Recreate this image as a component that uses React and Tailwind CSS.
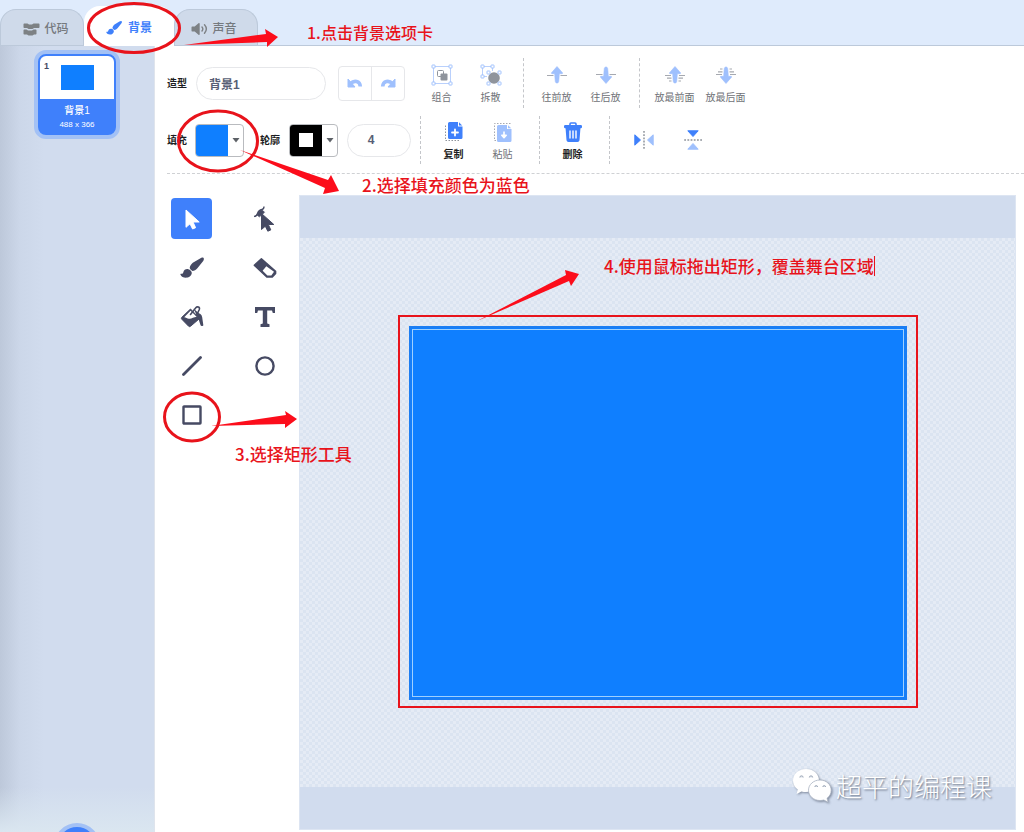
import { useState } from "react";

const dark = "#464a63";

function CursorIcon() {
  return (
    <svg viewBox="0 0 24 24" className="size-6" fill="currentColor" stroke="currentColor" strokeLinejoin="round">
      <path d="M6 3v17.300l4-3.500 2.600 5.200 3-1.300-2.600-5.700h6.200z" />
    </svg>
  );
}

function ReshapeIcon() {
  return (
    <svg viewBox="0 0 26 28" className="h-7 w-[26px]" fill={dark} stroke={dark} strokeLinejoin="round">
      <path d="M2 11.500c2.500-.2 3-1 3.500-3 .8-2.500 2.200-3.500 4.500-4 1.500-.3 2-1.200 2-3" fill="none" strokeWidth="1.300" />
      <path d="M5.500 10.500c.2-3 2-5 5-5.200l2 2-5 4.500z" strokeWidth=".8" />
      <path d="M9.500 8.500v16l3.800-3.300 2.500 5 3-1.300-2.500-5.400h5.500z" />
    </svg>
  );
}

function BrushIcon({ className = "size-6" }) {
  return (
    <svg viewBox="0 0 24 24" className={className} fill="currentColor">
      <path d="M23.400 1.800c.8.700.5 2-.2 3.200l-5.600 7c-1.500 1.900-3.500 2.900-5.200 2.900-1.200-.6-2.300-1.700-2.700-2.900.2-1.900 1.300-3.700 3.100-5.200l7.300-4.400c1.200-.9 2.500-1.300 3.300-.6z" />
      <path d="M8.300 13.200c2 .5 3.400 2 3.500 3.900-.3 3-3 4.700-5.900 4.700-2.500 0-4.600-1.100-5.500-3.300-.2-.6.200-1 .8-.8 1.400.3 1.900-.4 2.200-1.700.5-2 2.500-3.300 4.900-2.800z" />
    </svg>
  );
}

function EraserIcon() {
  return (
    <svg viewBox="0 0 24 24" className="size-6" stroke={dark} strokeWidth="1.500" strokeLinejoin="round">
      <path d="M8.400 2.800L1.300 9.300 13.800 21h5.500l3.300-3.600v-2z" fill={dark} />
      <path d="M13.300 10.300l7.700 5.500-2.700 3.700h-3.900l-4.800-4.700z" fill="white" stroke="none" />
    </svg>
  );
}

function FillIcon() {
  return (
    <svg viewBox="0 0 24 24" className="size-6" fill={dark}>
      <path d="M10.500 4L1.800 12.300c-.6.600-.6 1.200 0 1.900l6.800 7c.6.600 1.300.6 2 0l9-7.700z" stroke={dark} strokeLinejoin="round" />
      <path d="M4.200 12.200l6.300-6.400 6.200 6c-3 .4-5.200 2.200-7.700 1.900-2-.2-3-1.500-4.800-1.500z" fill="white" />
      <path d="M10.500 9.500l5.300-6.800c1.500-1.800 4.400-.5 3.500 1.800l-2.800 6" fill="none" stroke={dark} strokeWidth="1.600" strokeLinecap="round" />
      <path d="M13.500 3.500l5 4.500c3 .8 3.800 3.200 4 6.500l.8 5.500c.2 1.200-2.300 1.500-2.800 0L18.500 14z" />
    </svg>
  );
}

function TextIcon() {
  return (
    <svg viewBox="0 0 20 20" className="size-5" fill={dark}>
      <path d="M0 0h20v6h-2.200l-.8-2.600h-4.800v13.200l2.300.6V20h-9v-2.800l2.300-.6V3.400H3L2.200 6H0z" />
    </svg>
  );
}

function LineIcon() {
  return (
    <svg viewBox="0 0 20 20" className="size-5" stroke={dark} strokeWidth="2.800" strokeLinecap="round">
      <path d="M1.500 18.500l17-17" />
    </svg>
  );
}

function OvalIcon() {
  return (
    <svg viewBox="0 0 20 20" className="size-5" stroke={dark} strokeWidth="2.400" fill="none">
      <circle cx="10" cy="10" r="8.600" />
    </svg>
  );
}

function RectIcon() {
  return (
    <svg viewBox="0 0 20 20" className="size-5" stroke={dark} strokeWidth="2.400" fill="none">
      <rect x="1.500" y="1.500" width="17" height="17" rx=".5" />
    </svg>
  );
}

function Handles({ points }) {
  return points.map(([x, y]) => (
    <rect key={`${x}-${y}`} x={x - 1.5} y={y - 1.5} width="3" height="3" rx=".5" fill="white" stroke="#9fc0fd" />
  ));
}

function GroupIcon() {
  return (
    <svg viewBox="0 0 22 22" className="size-[22px]">
      <rect x="2.500" y="2.500" width="17" height="17" fill="none" stroke="#b9d0fc" />
      <rect x="6.500" y="6.500" width="6" height="6" rx="1" fill="white" stroke="#8f949c" />
      <rect x="9.500" y="9.500" width="7" height="7" rx="1" fill="#8f949c" />
      <Handles points={[[2.5, 2.5], [19.5, 2.5], [2.5, 19.5], [19.5, 19.5]]} />
    </svg>
  );
}

function UngroupIcon() {
  return (
    <svg viewBox="0 0 22 22" className="size-[22px]">
      <path d="M12.500 7V2.500h-10v10H7" fill="none" stroke="#b9d0fc" />
      <circle cx="14" cy="14" r="5.800" fill="#8f949c" />
      <Handles points={[[2.5, 2.5], [12.5, 2.5], [2.5, 12.5], [8.5, 8.5], [19.5, 8.5], [8.5, 19.5], [19.5, 19.5]]} />
    </svg>
  );
}

function ArrangeIcon({ down, far }) {
  return (
    <svg viewBox="0 0 22 22" className="size-[22px]">
      <g transform={down ? "rotate(180 11 11)" : undefined}>
        <path
          d={far ? "M1 11.500h6M15 11.500h6M3 14.200h4.500M14.500 14.200H19M5 17h2.500M14.500 17H17" : "M1 11.500h6.500M14.500 11.500H21"}
          stroke="#a6a9b0"
          strokeWidth="1.200"
        />
        <path
          d="M11 2.500L5.500 8.800c-.3.500 0 .9.500.9h2.700c.2 3 .3 5.500.6 7.800.3 2 3.100 2 3.400 0 .3-2.300.4-4.800.6-7.800H16c.5 0 .8-.4.500-.9z"
          fill="#9fc0fd"
          stroke="#9fc0fd"
          strokeWidth=".6"
          strokeLinejoin="round"
        />
      </g>
    </svg>
  );
}

function UndoIcon({ flip }) {
  return (
    <svg viewBox="0 0 20 20" className="size-5" fill="#9fc0fd" stroke="#9fc0fd" strokeLinejoin="round">
      <g transform={flip ? "matrix(-1 0 0 1 20 0)" : undefined}>
        <path d="M3 6v8h7z" />
        <path d="M5.500 10.500c3.500-3.500 9.500-2.800 9.800 3" fill="none" strokeWidth="3.600" />
      </g>
    </svg>
  );
}

function CopyIcon() {
  return (
    <svg viewBox="0 0 20 20" className="size-5">
      <path d="M1.500 3.500v15h14" fill="none" stroke="#8f949c" strokeDasharray="1.500 1.500" />
      <path d="M5.500 0H14v4.500h4.500v11a1.500 1.500 0 0 1-1.500 1.500H5.500A1.500 1.500 0 0 1 4 15.500v-14A1.500 1.500 0 0 1 5.500 0z" fill="#3f80fb" />
      <path d="M15 .3l3.200 3.200H15z" fill="#3f80fb" />
      <path d="M11 7.500v6M8 10.500h6" stroke="white" strokeWidth="1.800" strokeLinecap="round" />
    </svg>
  );
}

function PasteIcon() {
  return (
    <svg viewBox="0 0 20 20" className="size-5">
      <path d="M17.500 1.500h-16v17H4" fill="none" stroke="#a6a9b0" strokeDasharray="1.500 1.500" />
      <path d="M5.500 3H14v4h4.500v11.500A1.500 1.500 0 0 1 17 20H5.500A1.500 1.500 0 0 1 4 18.500v-14A1.500 1.500 0 0 1 5.500 3z" fill="#9fc0fd" />
      <path d="M15 3.200l3.200 3H15z" fill="#9fc0fd" />
      <path d="M11 9.500v6M8.800 13.300l2.200 2.400 2.200-2.400z" fill="white" stroke="white" strokeWidth="1.600" strokeLinejoin="round" />
    </svg>
  );
}

function DeleteIcon() {
  return (
    <svg viewBox="0 0 20 20" className="size-5">
      <path d="M7 3.500V2a1 1 0 0 1 1-1h4a1 1 0 0 1 1 1v1.500" fill="none" stroke="#3f80fb" strokeWidth="1.600" />
      <rect x="1" y="3" width="18" height="3.200" rx="1.200" fill="#3f80fb" />
      <path d="M2.500 5.500h15l-1 12.700a2 2 0 0 1-2 1.800h-9a2 2 0 0 1-2-1.800z" fill="#3f80fb" />
      <path d="M7 9v7M10 9v7M13 9v7" stroke="white" strokeWidth="1.400" strokeLinecap="round" />
    </svg>
  );
}

function FlipIcon({ vertical }) {
  return (
    <svg viewBox="0 0 20 20" className="size-5" strokeLinejoin="round">
      <g transform={vertical ? "rotate(90 10 10)" : undefined}>
        <path d="M.8 4.800v10.400L6.500 10z" fill="#3f80fb" stroke="#3f80fb" />
        <path d="M19.200 4.800v10.400L13.500 10z" fill="#9fc0fd" stroke="#9fc0fd" />
        <path d="M10 1v18" stroke="#8f949c" strokeWidth="1.500" strokeDasharray="1.800 1.400" />
      </g>
    </svg>
  );
}

function CodeIcon() {
  return (
    <svg viewBox="0 0 17 14" className="h-3.5 w-[17px]" fill="#7d8184">
      <path d="M1.500 1.500h3l1.500 1h3l1.500-1h5c.6 0 1 .4 1 1v2.500c0 .6-.4 1-1 1H11l-1.500 1h-4L4 6H1.500c-.6 0-1-.4-1-1V2.500c0-.6.400-1 1-1z" />
      <path d="M1.500 7.500h2l1.500 1h4l1.500-1h2c.6 0 1 .4 1 1v3c0 .6-.4 1-1 1H11l-1.500 1H5.500L4 12.500H1.500c-.6 0-1-.4-1-1v-3c0-.6.400-1 1-1z" />
    </svg>
  );
}

function SoundIcon() {
  return (
    <svg viewBox="0 0 17 14" className="h-3.5 w-[17px]" fill="#7d8184">
      <path d="M1.500 4.500h2.200L7.500 1.200c.6-.5 1.200-.2 1.200.6v10.400c0 .8-.6 1.100-1.200.6L3.700 9.500H1.500c-.8 0-1-.5-1-1v-3c0-.5.200-1 1-1z" />
      <path d="M11 5c1 1.200 1 2.800 0 4M13.500 2.800c2.200 2.500 2.200 5.900 0 8.400" fill="none" stroke="#7d8184" strokeWidth="1.400" strokeLinecap="round" />
    </svg>
  );
}

function WeChatIcon() {
  return (
    <svg viewBox="0 0 40 36" className="h-9 w-10 drop-shadow-[1px_1px_1px_rgba(90,100,120,0.7)]">
      <path d="M14 1C6.500 1 1 6 1 12.500c0 3.600 1.800 6.800 4.800 9L4.500 26l5-2.500c1.500.4 3 .6 4.500.6 7.500 0 13-5 13-11.600S21.500 1 14 1z" fill="white" />
      <path d="M28 12c-6.500 0-11.500 4.600-11.500 10.200S21.500 32.500 28 32.500c1.300 0 2.600-.2 3.800-.5l4.400 2.300-1.200-4c2.600-1.900 4.200-4.800 4.200-8.100C39.200 16.600 34.300 12 28 12z" fill="white" stroke="#a9b3c2" strokeWidth=".8" />
      <g fill="#dde3ec" stroke="#8f9aab" strokeWidth=".8">
        <path d="M7.800 9.500a1.700 1.700 0 1 1 3.400 0M17.300 9.500a1.700 1.700 0 1 1 3.400 0" />
        <path d="M22.800 19a1.400 1.400 0 1 1 2.800 0M30.800 19a1.400 1.400 0 1 1 2.800 0" />
      </g>
    </svg>
  );
}

function ActionButton({ icon, label, enabled, wide }) {
  return (
    <button
      type="button"
      className={`flex flex-col items-center gap-1 whitespace-nowrap pt-1 text-[10px] leading-4 ${wide ? "w-[51px]" : "w-[49px]"} ${
        enabled ? "font-bold text-[#1c1d22]" : "text-[#6f7277]"
      }`}
    >
      <span className="flex h-[22px] items-center">{icon}</span>
      {label}
    </button>
  );
}

function Divider({ className }) {
  return <div className={`self-stretch border-l border-dashed border-[#c4c6ca] ${className}`} />;
}

function ColorPicker({ label, children, swatch }) {
  return (
    <button
      type="button"
      aria-label={label}
      className="flex h-[33px] w-[49px] shrink-0 overflow-hidden rounded-[4px] border border-[#b9bbbf] bg-white"
    >
      <span className={`flex h-full w-8 items-center justify-center ${swatch}`}>{children}</span>
      <span className="flex h-full flex-1 items-center justify-center">
        <svg viewBox="0 0 8 5" className="h-[5px] w-2" fill="#5c6066">
          <path d="M.5 0h7L4 4.500z" />
        </svg>
      </span>
    </button>
  );
}

const tools = [
  { name: "选择", icon: <CursorIcon /> },
  { name: "变形", icon: <ReshapeIcon /> },
  { name: "画笔", icon: <BrushIcon /> },
  { name: "橡皮擦", icon: <EraserIcon /> },
  { name: "填充", icon: <FillIcon /> },
  { name: "文本", icon: <TextIcon /> },
  { name: "线段", icon: <LineIcon /> },
  { name: "圆", icon: <OvalIcon /> },
  { name: "矩形", icon: <RectIcon /> },
];

function Tabs() {
  return (
    <div className="flex h-[46px] items-end border-b border-[#bcc9da] text-xs font-medium text-[#75797e]">
      <button type="button" className="flex h-9 w-[84px] items-center justify-center gap-1 rounded-t-2xl border border-b-0 border-[#bcc9da] bg-[#cfdaea] pl-2 pt-0.5">
        <CodeIcon />
        代码
      </button>
      <button type="button" className="-mb-px flex h-10 w-[90px] items-center justify-center gap-1.5 rounded-t-2xl bg-white pt-1 font-bold text-[#3f80fb]">
        <BrushIcon className="size-4" />
        背景
      </button>
      <button type="button" className="flex h-9 w-[84px] items-center justify-center gap-1 rounded-t-2xl border border-b-0 border-[#bcc9da] bg-[#cfdaea] pr-1 pt-0.5">
        <SoundIcon />
        声音
      </button>
    </div>
  );
}

function Sidebar() {
  return (
    <aside className="flex w-[154px] shrink-0 flex-col items-center justify-between bg-[linear-gradient(90deg,#bdc8da_0,#ccd7e9_20px,#d1dcee_44px)] pt-1">
      <button type="button" className="w-[86px] overflow-hidden rounded-xl border-4 border-[#a3c1f5] bg-[#3f80fb] text-white">
        <span className="relative mx-0.5 mt-0.5 flex h-[43px] items-center justify-center rounded-t-md bg-white">
          <span className="absolute left-1 top-1 text-[9px] font-bold leading-3 text-[#464a63]">1</span>
          <span className="h-[25px] w-[33px] bg-[#0f7fff]" />
        </span>
        <span className="mt-1 block text-[10px] font-medium leading-4">背景1</span>
        <span className="mb-1 block text-[8px] leading-3">488 x 366</span>
      </button>
      <div className="flex h-[45px] w-full justify-center overflow-hidden bg-linear-to-b from-transparent to-[#dae6f0] pt-9">
        <button type="button" aria-label="选择一个背景" className="size-[46px] shrink-0 rounded-full border-4 border-[#a3c1f5] bg-[#3f80fb]" />
      </div>
    </aside>
  );
}

function Toolbar() {
  const [name, setName] = useState("背景1");
  const [width, setWidth] = useState("4");

  return (
    <div className="ml-3 border-b border-dashed border-[#cfd1d4] pb-[9px] pt-3">
      <div className="flex h-[50px] items-center">
        <label htmlFor="costume" className="w-[29px] shrink-0 text-[10px] font-bold text-[#1c1d22]">造型</label>
        <input
          id="costume"
          value={name}
          onChange={(e) => setName(e.target.value)}
          className="h-[33px] w-[130px] rounded-full border border-[#e6e7ea] px-3 text-xs font-bold text-[#575e75]"
        />
        <div className="ml-3 flex h-[35px] w-[67px] divide-x divide-[#e6e7ea] rounded-[4px] border border-[#e6e7ea]">
          <button type="button" aria-label="撤销" className="flex flex-1 items-center justify-center">
            <UndoIcon />
          </button>
          <button type="button" aria-label="重做" className="flex flex-1 items-center justify-center">
            <UndoIcon flip />
          </button>
        </div>
        <div className="ml-3 flex">
          <ActionButton icon={<GroupIcon />} label="组合" />
          <ActionButton icon={<UngroupIcon />} label="拆散" />
        </div>
        <Divider className="mx-2" />
        <ActionButton icon={<ArrangeIcon />} label="往前放" />
        <ActionButton icon={<ArrangeIcon down />} label="往后放" />
        <Divider className="mx-[9px]" />
        <ActionButton icon={<ArrangeIcon far />} label="放最前面" wide />
        <ActionButton icon={<ArrangeIcon far down />} label="放最后面" wide />
      </div>
      <div className="mt-2 flex h-12 items-center">
        <span className="w-7 shrink-0 text-[10px] font-bold text-[#1c1d22]">填充</span>
        <ColorPicker label="填充" swatch="bg-[#0f7fff]" />
        <span className="ml-4 w-[29px] shrink-0 text-[10px] font-bold text-[#1c1d22]">轮廓</span>
        <ColorPicker label="轮廓" swatch="bg-black">
          <span className="size-3.5 bg-white" />
        </ColorPicker>
        <input
          aria-label="轮廓宽度"
          value={width}
          onChange={(e) => setWidth(e.target.value)}
          className="ml-[9px] h-[33px] w-16 rounded-full border border-[#e6e7ea] pr-4 text-center text-xs font-bold text-[#575e75]"
        />
        <Divider className="ml-[9px] mr-2" />
        <ActionButton icon={<CopyIcon />} label="复制" enabled />
        <ActionButton icon={<PasteIcon />} label="粘贴" />
        <Divider className="ml-3 mr-2" />
        <ActionButton icon={<DeleteIcon />} label="删除" enabled />
        <Divider className="ml-3 mr-[9px]" />
        <button type="button" aria-label="水平翻转" className="flex w-[49px] justify-center">
          <FlipIcon />
        </button>
        <button type="button" aria-label="垂直翻转" className="flex w-[49px] justify-center">
          <FlipIcon vertical />
        </button>
      </div>
    </div>
  );
}

function Canvas() {
  return (
    <div className="mb-0.5 ml-3.5 mr-2 mt-[21px] flex min-w-0 flex-1 flex-col border border-[#dde5f2] bg-[#d1dcee]">
      <div className="h-[42px]" />
      <div className="flex flex-1 items-center justify-center bg-[repeating-conic-gradient(#dbe4f1_0_25%,#e5ebf5_0_50%)] bg-[length:6px_6px]">
        <div className="relative h-[374px] w-[498px] border-2 border-[#1c7df2] bg-[#0f7fff]">
          <div className="absolute inset-px border border-[#9fd0ff]" />
          <div className="absolute -inset-x-[13px] -bottom-[10px] -top-[13px] border-2 border-[#e8131b]" />
        </div>
      </div>
      <div className="h-[42px]" />
    </div>
  );
}

function Annotations() {
  return (
    <div className="pointer-events-none absolute inset-0 overflow-hidden font-['Noto_Sans_CJK_SC',sans-serif] font-medium text-[#e8131b]">
      <svg viewBox="0 0 1024 832" className="absolute left-0 top-0 h-[832px] w-[1024px]" fill="none">
        <g stroke="#e8131b" strokeWidth="3">
          <ellipse cx="134" cy="28" rx="45.500" ry="24.500" />
          <ellipse cx="218" cy="141" rx="39.500" ry="30" />
          <ellipse cx="192" cy="417" rx="27.500" ry="24" />
        </g>
        <g fill="#fc0d1b">
          <path d="M184 45L266 34l-1-5 13 8-11 10v-5z" />
          <path d="M240 150l88 30 3-5 8 16-16 3 2-6z" />
          <path d="M211 426l75-11-1-4 12 8-12 9v-4z" />
          <path d="M477 321l89-46-1-5 14 4-8 12-2-5z" />
        </g>
      </svg>
      <p className="absolute left-[307px] top-5 text-base leading-6">1.点击背景选项卡</p>
      <p className="absolute left-[362px] top-[173px] text-[17px] leading-6">2.选择填充颜色为蓝色</p>
      <p className="absolute left-[235px] top-[442px] text-[17px] leading-6">3.选择矩形工具</p>
      <p className="absolute left-[604px] top-[256px] border-r border-[#e8131b] text-[17px] leading-5">4.使用鼠标拖出矩形，覆盖舞台区域</p>
      <div className="absolute bottom-7 right-8 flex items-center gap-1 text-[26px] font-light leading-9 text-white">
        <WeChatIcon />
        <span className="[text-shadow:1px_1px_2px_rgba(70,80,100,0.8)]">超平的编程课</span>
      </div>
    </div>
  );
}

export default function App() {
  const [active, setActive] = useState("选择");

  return (
    <div className="relative flex h-screen flex-col overflow-hidden bg-[#dfebfc] font-['Liberation_Sans','Noto_Sans_CJK_SC',sans-serif]">
      <Tabs />
      <div className="flex min-h-0 flex-1">
        <Sidebar />
        <main className="flex min-w-0 flex-1 flex-col border-l border-[#dfe4ec] bg-white">
          <Toolbar />
          <div className="flex min-h-0 flex-1">
            <div className="ml-4 grid shrink-0 grid-cols-2 content-start gap-x-8 gap-y-2 pt-6">
              {tools.map((tool) => (
                <button
                  key={tool.name}
                  type="button"
                  aria-label={tool.name}
                  onClick={() => setActive(tool.name)}
                  className={`flex size-[41px] items-center justify-center rounded-[4px] ${
                    active === tool.name ? "bg-[#3f80fb] text-white" : "text-[#464a63]"
                  }`}
                >
                  {tool.icon}
                </button>
              ))}
            </div>
            <Canvas />
          </div>
        </main>
      </div>
      <Annotations />
    </div>
  );
}
